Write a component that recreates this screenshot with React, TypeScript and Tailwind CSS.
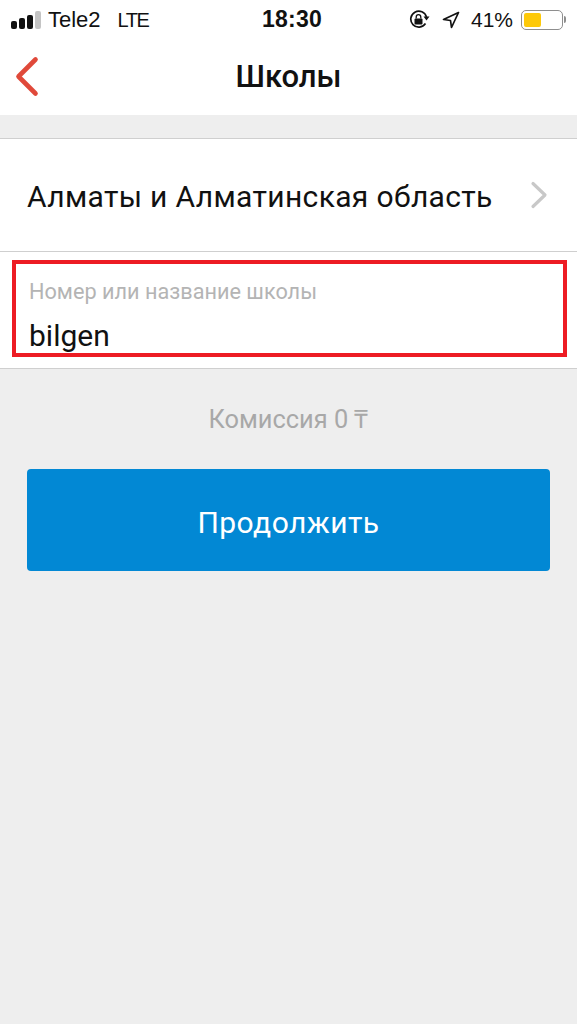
import React from 'react';

const StatusBar: React.FC = () => (
  <div className="h-[38px] flex items-center justify-between pt-[1px] pl-[11px] pr-[11px] text-[22px] leading-none text-[#111] font-['Liberation_Sans',sans-serif]">
    <div className="flex items-center w-[200px]">
      <div className="flex items-end gap-[2px] h-[18px] mr-[7px]">
        <span className="w-[6px] h-[8px] rounded-[2px] bg-[#111]" />
        <span className="w-[6px] h-[11px] rounded-[2px] bg-[#111]" />
        <span className="w-[6px] h-[14px] rounded-[2px] bg-[#111]" />
        <span className="w-[6px] h-[18px] rounded-[2px] bg-[#c4c4c4]" />
      </div>
      <span>Tele2</span>
      <span className="ml-[17px] text-[20px] tracking-[-1.5px]">LTE</span>
    </div>
    <span className="font-bold text-[23px] tracking-[0.2px] -ml-[36px]">18:30</span>
    <div className="flex items-center">
      <svg width="21" height="20" viewBox="0 0 21 20" className="mr-[12px]" fill="none">
        <path d="M16.5 13.5A8 8 0 1 1 17.5 7" stroke="#111" strokeWidth="1.7" />
        <path d="M14.5 6.5h6l-3 4z" fill="#111" />
        <rect x="5.5" y="8.5" width="8" height="6" rx="1" fill="#111" />
        <path d="M7.2 8.5V7a2.3 2.3 0 0 1 4.6 0v1.5" stroke="#111" strokeWidth="1.3" />
      </svg>
      <svg width="18" height="18" viewBox="0 0 18 18" className="mr-[11px]" fill="none">
        <path d="M16.5 1.5 1.5 8.5l7 1 1 7z" stroke="#111" strokeWidth="1.7" strokeLinejoin="round" />
      </svg>
      <span className="text-[21px]">41%</span>
      <div className="ml-[8px] w-[42px] h-[20px] rounded-[5px] border-[1.5px] border-[#8e8e8e] p-[2px] flex">
        <div className="w-[17px] rounded-[2px] bg-[#fdc90a]" />
      </div>
      <span className="ml-[1px] w-[2px] h-[7px] rounded-r-[2px] bg-[#8e8e8e]" />
    </div>
  </div>
);

const App: React.FC = () => {
  return (
    <div className="relative min-h-screen bg-[#eeeeee] font-['Roboto',sans-serif]">
      {/* Header */}
      <div className="bg-white h-[115px]">
        <StatusBar />
        <div className="relative h-[77px] flex items-center justify-center">
          <svg width="26" height="42" viewBox="0 0 26 42" fill="none" className="absolute left-[14px] top-[18px]">
            <path d="M21.5 3.5 4.5 20.5 21.5 37.5" stroke="#e0493a" strokeWidth="4.6" strokeLinecap="round" strokeLinejoin="round" />
          </svg>
          <h1 className="text-[31px] leading-none font-medium text-[#111]">Школы</h1>
        </div>
      </div>

      {/* Form */}
      <div className="mt-[23px] bg-white border-y border-[#cfcfcf]">
        <div className="h-[113px] flex items-center justify-between pl-[27px] pr-[29px] border-b border-[#cfcfcf]">
          <span className="text-[30px] leading-none text-[#111] tracking-[0.35px] pt-[3px]">Алматы и Алматинская область</span>
          <svg width="18" height="28" viewBox="0 0 18 28" fill="none">
            <path d="M3 2.5 15 14 3 25.5" stroke="#c8c8c8" strokeWidth="3.2" strokeLinecap="round" strokeLinejoin="round" />
          </svg>
        </div>
        <div className="h-[116px] pl-[29px] pt-[29px]">
          <div className="text-[21.7px] leading-none text-[#b4b4b4]">Номер или название школы</div>
          <div className="mt-[18px] text-[30px] leading-none text-[#111]">bilgen</div>
        </div>
      </div>

      {/* Fee and submit */}
      <div className="px-[27px] pt-[38px]">
        <div className="text-center text-[25.4px] leading-none text-[#a8a8a8]">Комиссия 0 ₸</div>
        <button className="mt-[37px] w-full h-[102px] rounded-[4px] bg-[#0288d4] text-white text-[30px] tracking-[0.45px] pt-[5px]">
          Продолжить
        </button>
      </div>

      {/* Red annotation frame */}
      <div className="absolute left-[12px] top-[260px] w-[555px] h-[97px] border-[4px] border-[#ed1c24]" />
    </div>
  );
};

export default App;
